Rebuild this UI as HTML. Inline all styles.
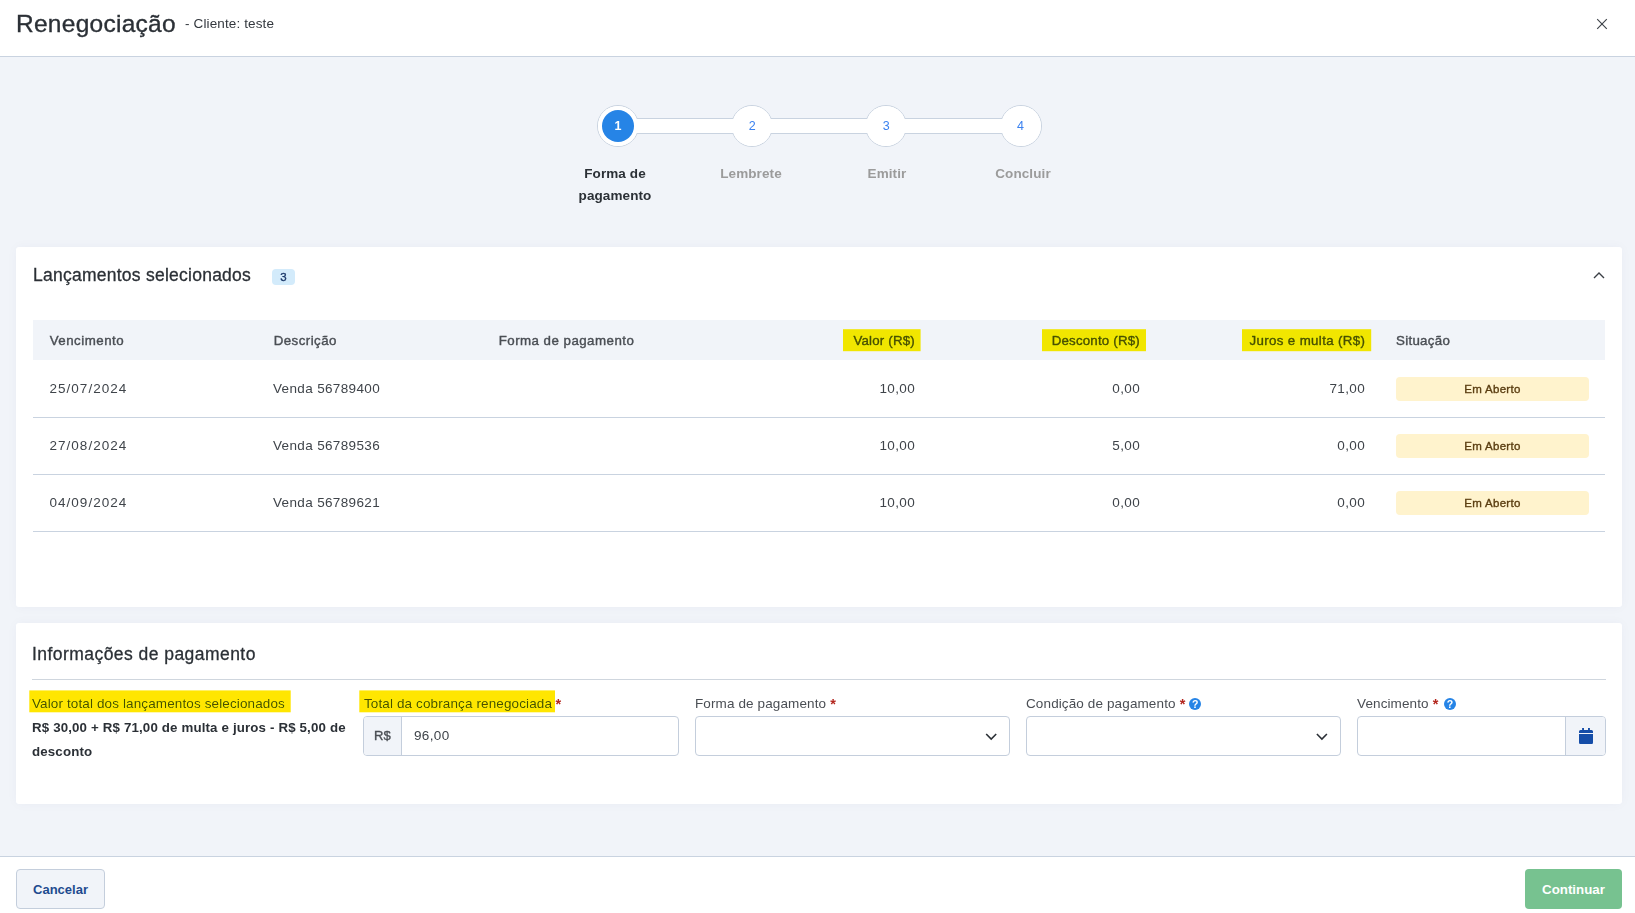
<!DOCTYPE html>
<html lang="pt-BR">
<head>
<meta charset="utf-8">
<title>Renegociação</title>
<style>
*{box-sizing:border-box;margin:0;padding:0}
html,body{width:1635px;height:913px;overflow:hidden}
body{font-family:"Liberation Sans",sans-serif;background:#f1f4f9;color:#2b3036;position:relative;font-size:13px}
.abs{position:absolute;white-space:nowrap}
/* header */
#hdr{position:absolute;left:0;top:0;width:1635px;height:57px;background:#fff;border-bottom:1px solid #c9d3e0}
#title{left:16px;top:9px;font-size:24.5px;line-height:30px;color:#2b3036;letter-spacing:.27px;-webkit-text-stroke:.35px #2b3036}
#sub{left:185px;top:16px;font-size:13.5px;line-height:16px;color:#33383e;letter-spacing:.13px}
#close{position:absolute;left:1596px;top:18px;width:12px;height:12px}
/* stepper */
.bar{position:absolute;left:618px;top:118px;width:403px;height:16px;background:#fff;border-top:1px solid #c9d3e0;border-bottom:1px solid #c9d3e0}
.stp{position:absolute;top:105px;width:42px;height:42px;border-radius:50%;background:#fff;border:1px solid #c9d3e0}
.stpin{position:absolute;top:106px;width:40px;height:40px;border-radius:50%;background:#fff;color:#3b82f0;font-size:12.5px;line-height:40px;text-align:center}
.stpin.act{top:110px;width:32px;height:32px;background:#2684e6;color:#fff;line-height:32px;font-size:12.5px;font-weight:bold}
.slbl{position:absolute;width:136px;text-align:center;font-weight:bold;font-size:13.5px;letter-spacing:.1px;line-height:22px;color:#9b9b9b;top:163px}
.slbl.act{color:#2b3036}
/* cards */
.card{position:absolute;left:16px;width:1606px;background:#fff;border-radius:3px;box-shadow:0 0 12px rgba(40,60,100,.035)}
#c1{top:247px;height:360px}
#c2{top:623px;height:181px}
.ctitle{font-size:17.5px;line-height:22px;color:#2b3036;-webkit-text-stroke:.3px #2b3036}
#badge{position:absolute;left:272px;top:269px;width:23px;height:16px;border-radius:4px;background:#d3ebfb;color:#1d3a6b;font-size:11.5px;-webkit-text-stroke:.35px #1d3a6b;line-height:16.5px;text-align:center}
#thead{position:absolute;left:33px;top:320px;width:1572px;height:40px;background:#f1f4f9}
.th{color:#4a4e54;font-size:13.3px;line-height:16px;top:333px;letter-spacing:.2px;-webkit-text-stroke:.4px #4a4e54}
.td{color:#3f444a;font-size:13.5px;line-height:16px;letter-spacing:.35px}
.td.d{letter-spacing:1.02px;margin-left:.5px}
.r{text-align:right}
.rowline{position:absolute;left:33px;width:1572px;height:1px;background:#c9d3e0}
.hl{position:absolute;left:0;top:0;fill:#ffe600;mix-blend-mode:darken;pointer-events:none}
.tag{position:absolute;left:1396px;width:193px;height:24px;border-radius:4px;background:#fff3cd;color:#5a3d10;font-size:11.5px;letter-spacing:.3px;-webkit-text-stroke:.35px #5a3d10;line-height:24px;text-align:center}
/* form */
.lbl{font-size:13.5px;line-height:16px;color:#4a4e54;top:696px;letter-spacing:.12px}
.req{color:#b3261e;margin-left:.2px;font-weight:bold;font-size:14.5px;line-height:10px;position:relative;top:.5px}
.inp{position:absolute;top:716px;height:40px;background:#fff;border:1px solid #c4cedc;border-radius:4px}
.hr{position:absolute;left:32px;top:679px;width:1574px;height:1px;background:#cfd6de}
.bold{font-weight:bold;color:#2b3036;font-size:13.3px;line-height:24px;letter-spacing:.15px}
.addon{position:absolute;top:717px;height:38px;background:#f1f4f9}
.help{position:absolute;width:12px;height:12px;border-radius:50%;background:#2684e6;color:#fff;font-size:10.5px;font-weight:bold;line-height:12.6px;text-align:center}
/* footer */
#ftr{position:absolute;left:0;top:856px;width:1635px;height:57px;background:#fff;border-top:1px solid #c9d3e0}
#cancel{position:absolute;left:16px;top:869px;width:89px;height:40px;border:1px solid #c4cedc;border-radius:4px;background:#f1f4f9;color:#1e4b8f;font-weight:bold;font-size:13px;line-height:40px;text-align:center}
#cont{position:absolute;left:1525px;top:869px;width:97px;height:40px;border-radius:4px;background:#77c290;color:#fff;font-weight:bold;font-size:13.3px;line-height:42px;text-align:center}
</style>
</head>
<body>
<div id="hdr"></div>
<div id="title" class="abs">Renegociação</div>
<div id="sub" class="abs">- Cliente: teste</div>
<svg id="close" viewBox="0 0 12 12"><path d="M1.2 1.2 L10.8 10.8 M10.8 1.2 L1.2 10.8" stroke="#3f444a" stroke-width="1.15" fill="none"/></svg>

<!-- stepper -->
<div class="stp" style="left:597px"></div>
<div class="stp" style="left:731.2px"></div>
<div class="stp" style="left:865.3px"></div>
<div class="stp" style="left:999.5px"></div>
<div class="bar"></div>
<div class="stpin" style="left:598px"></div>
<div class="stpin act" style="left:602px">1</div>
<div class="stpin" style="left:732.2px">2</div>
<div class="stpin" style="left:866.3px">3</div>
<div class="stpin" style="left:1000.5px">4</div>
<div class="slbl act" style="left:547px">Forma de<br>pagamento</div>
<div class="slbl" style="left:683px">Lembrete</div>
<div class="slbl" style="left:819px">Emitir</div>
<div class="slbl" style="left:955px">Concluir</div>

<!-- card 1 -->
<div class="card" id="c1"></div>
<div class="abs ctitle" style="left:33px;top:264px;letter-spacing:.25px">Lançamentos selecionados</div>
<div id="badge">3</div>
<svg class="abs" style="left:1592px;top:270px" width="14" height="10" viewBox="0 0 14 10"><path d="M2 8 L7 3 L12 8" stroke="#3a3f45" stroke-width="1.4" fill="none"/></svg>
<div id="thead"></div>
<div class="abs th" style="left:49.7px;letter-spacing:.5px">Vencimento</div>
<div class="abs th" style="left:273.7px;letter-spacing:.45px">Descrição</div>
<div class="abs th" style="left:498.7px;letter-spacing:.47px">Forma de pagamento</div>
<div class="abs th r" style="right:720px">Valor (R$)</div>
<div class="abs th r" style="right:495px">Desconto (R$)</div>
<div class="abs th r" style="right:269.7px;letter-spacing:.36px">Juros e multa (R$)</div>
<div class="abs th" style="left:1396px;letter-spacing:.3px">Situação</div>

<div class="abs td d" style="left:49px;top:381px">25/07/2024</div>
<div class="abs td" style="left:273px;top:381px">Venda 56789400</div>
<div class="abs td r" style="right:720px;top:381px">10,00</div>
<div class="abs td r" style="right:495px;top:381px">0,00</div>
<div class="abs td r" style="right:270px;top:381px">71,00</div>
<div class="tag" style="top:377px">Em Aberto</div>
<div class="rowline" style="top:417px"></div>

<div class="abs td d" style="left:49px;top:438px">27/08/2024</div>
<div class="abs td" style="left:273px;top:438px">Venda 56789536</div>
<div class="abs td r" style="right:720px;top:438px">10,00</div>
<div class="abs td r" style="right:495px;top:438px">5,00</div>
<div class="abs td r" style="right:270px;top:438px">0,00</div>
<div class="tag" style="top:434px">Em Aberto</div>
<div class="rowline" style="top:474px"></div>

<div class="abs td d" style="left:49px;top:495px">04/09/2024</div>
<div class="abs td" style="left:273px;top:495px">Venda 56789621</div>
<div class="abs td r" style="right:720px;top:495px">10,00</div>
<div class="abs td r" style="right:495px;top:495px">0,00</div>
<div class="abs td r" style="right:270px;top:495px">0,00</div>
<div class="tag" style="top:491px">Em Aberto</div>
<div class="rowline" style="top:531px"></div>

<!-- card 2 -->
<div class="card" id="c2"></div>
<div class="abs ctitle" style="left:32px;top:643px;letter-spacing:.45px">Informações de pagamento</div>
<div class="hr"></div>
<div class="abs lbl" style="left:32px">Valor total dos lançamentos selecionados</div>
<div class="abs bold" style="left:32px;top:716px">R$ 30,00 + R$ 71,00 de multa e juros - R$ 5,00 de<br>desconto</div>
<div class="abs lbl" style="left:364px">Total da cobrança renegociada <span class="req" style="margin-left:-.5px">*</span></div>
<div class="abs lbl" style="left:695px">Forma de pagamento <span class="req">*</span></div>
<div class="abs lbl" style="left:1026px">Condição de pagamento <span class="req">*</span></div>
<div class="abs lbl" style="left:1357px">Vencimento <span class="req">*</span></div>

<div class="inp" style="left:363px;width:316px"></div>
<div class="addon" style="left:364px;width:38px;border-right:1px solid #c4cedc;border-radius:3px 0 0 3px"></div>
<div class="abs" style="left:374px;top:728px;font-size:13px;line-height:16px;color:#4a4e54;-webkit-text-stroke:.35px #4a4e54;letter-spacing:0">R$</div>
<div class="abs td" style="left:414px;top:728px">96,00</div>
<div class="inp" style="left:695px;width:315px"></div>
<svg class="abs" style="left:984px;top:731px" width="14" height="11" viewBox="0 0 14 11"><path d="M2.2 3 L7.2 8 L12.2 3" stroke="#2b3036" stroke-width="1.6" fill="none"/></svg>
<div class="inp" style="left:1026px;width:315px"></div>
<svg class="abs" style="left:1315px;top:731px" width="14" height="11" viewBox="0 0 14 11"><path d="M1.9 3 L6.9 8 L11.9 3" stroke="#2b3036" stroke-width="1.6" fill="none"/></svg>
<div class="inp" style="left:1357px;width:249px"></div>
<div class="addon" style="left:1565px;width:40px;border-left:1px solid #c4cedc;border-radius:0 3px 3px 0"></div>
<svg class="abs" style="left:1579px;top:728px" width="14" height="16" viewBox="0 0 14 16"><path d="M3.1 0 h1.900 v2 h4 v-2 h1.900 v2 h1.600 a1.500 1.500 0 0 1 1.500 1.500 v1.400 h-14 v-1.400 a1.500 1.500 0 0 1 1.500 -1.500 h1.600 z M0 6 h14 v8.600 a1.500 1.500 0 0 1 -1.500 1.500 h-11 a1.500 1.500 0 0 1 -1.500 -1.500 z" fill="#154da8"/></svg>
<div class="help" style="left:1189.1px;top:698px">?</div>
<div class="help" style="left:1444px;top:698px">?</div>

<!-- highlights (darken) -->
<svg class="hl" width="1635" height="913" viewBox="0 0 1635 913">
<rect x="843" y="329.2" width="77.6" height="22"/>
<rect x="1042" y="329.2" width="104" height="22"/>
<rect x="1242" y="329.2" width="129.2" height="22"/>
<rect x="29.3" y="690.4" width="261.4" height="21.9"/>
<rect x="359.3" y="690.4" width="195.7" height="21.9"/>
</svg>
<!-- footer -->
<div id="ftr"></div>
<div id="cancel">Cancelar</div>
<div id="cont">Continuar</div>
</body>
</html>
